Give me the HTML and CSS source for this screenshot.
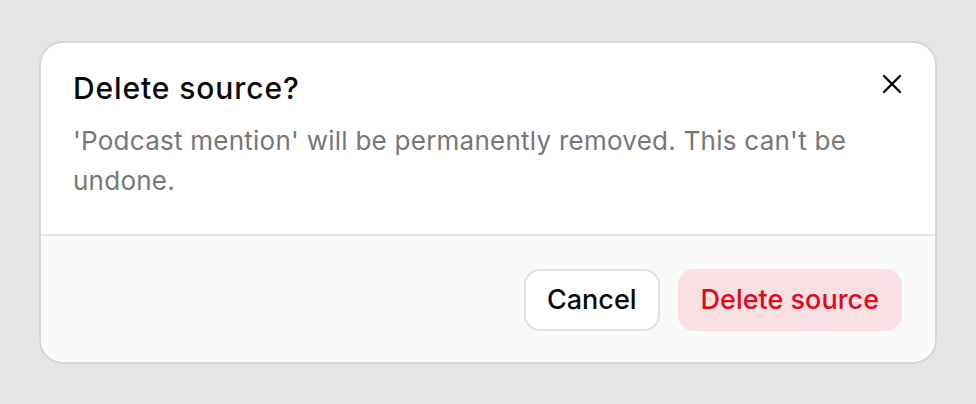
FILE: index.html
```html
<!DOCTYPE html>
<html lang="en">
<head>
  <meta charset="UTF-8">
  <meta name="viewport" content="width=device-width, initial-scale=1.0">
  <title>Delete source</title>
  <link rel="stylesheet" href="styles.css">
</head>
<body>
  <div class="dialog">
    <div class="dialog-body">
      <div class="dialog-header">
        <h2 class="dialog-title">Delete source?</h2>
        <button class="close-button" aria-label="Close">
          <svg width="22" height="22" viewBox="0 0 22 22" fill="none" stroke="currentColor" stroke-width="2.4" stroke-linecap="round">
            <path d="M3 3 L19 19 M19 3 L3 19"/>
          </svg>
        </button>
      </div>
      <p class="dialog-text">'Podcast mention' will be permanently removed. This can't be undone.</p>
    </div>

    <div class="dialog-footer">
      <button class="btn btn-cancel">Cancel</button>
      <button class="btn btn-danger">Delete source</button>
    </div>
  </div>
</body>
</html>
```

FILE: styles.css
```css
body {
  margin: 0;
  height: 100vh;
  display: flex;
  justify-content: center;
  align-items: center;
  background: #e5e5e5;
  font-family: Inter, "Noto Sans", sans-serif;
  color: #0a0a0a;
}

.dialog {
  width: 898px;
  box-sizing: border-box;
  background: #fff;
  border: 2px solid #d6d6d6;
  border-radius: 24px;
  overflow: hidden;
}

.dialog-body {
  padding: 25px 32px 33px;
  border-bottom: 2px solid #e5e5e5;
}

.dialog-header {
  display: flex;
  justify-content: space-between;
  align-items: flex-start;
}

.dialog-title {
  margin: 0;
  font-size: 30px;
  line-height: 40px;
  font-weight: 500;
  letter-spacing: 0.9px;
}

.close-button {
  width: 26px;
  height: 32px;
  margin-right: -2px;
  padding: 0;
  border: none;
  background: none;
  color: #0a0a0a;
  display: flex;
  align-items: center;
  justify-content: center;
  cursor: pointer;
}

.dialog-text {
  margin: 13px 0 0;
  font-size: 26px;
  line-height: 40px;
  letter-spacing: 0.25px;
  color: #777;
}

.dialog-footer {
  display: flex;
  justify-content: flex-end;
  gap: 18px;
  padding: 33px 33px 31px;
  background: #fafafa;
}

.btn {
  height: 62px;
  padding: 0 21px;
  border-radius: 16px;
  font-family: inherit;
  font-size: 27px;
  font-weight: 500;
  cursor: pointer;
}

.btn-cancel {
  background: #fff;
  border: 2px solid #e3e3e3;
  color: #0a0a0a;
}

.btn-danger {
  background: #f9e0e2;
  border: 2px solid #f9e0e2;
  color: #de0a1e;
}
```
